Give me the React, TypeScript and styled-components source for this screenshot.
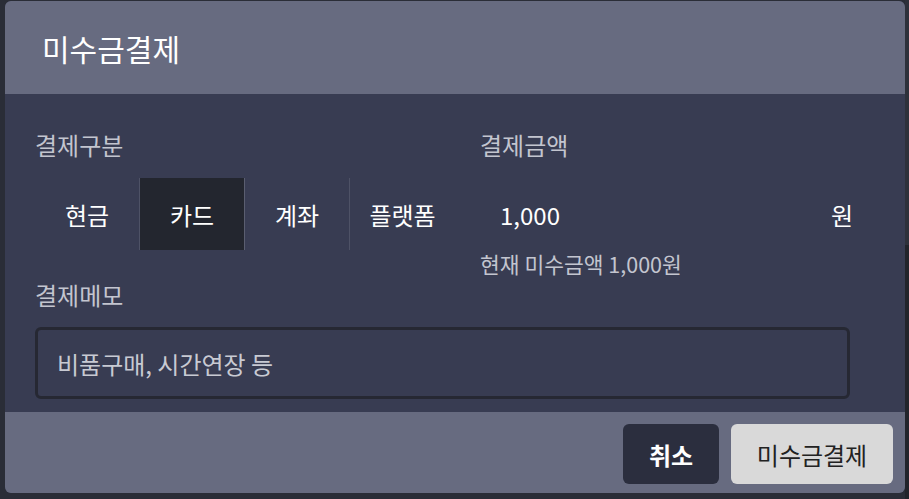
import React, { useState } from "react";
import styled, { createGlobalStyle } from "styled-components";

const GlobalStyle = createGlobalStyle`
  html, body {
    margin: 0;
    padding: 0;
    background: #2a2d37;
  }
  body {
    font-family: "Noto Sans CJK KR", "Noto Sans", sans-serif;
    -webkit-font-smoothing: antialiased;
  }
  * { box-sizing: border-box; }
`;

// Dimmed page behind the dialog; the right edge shows a lighter panel above a darker one.
const Backdrop = styled.div`
  width: 909px;
  height: 499px;
  padding: 1px 4px 6px 5px;
  background:
    linear-gradient(#2e313b, #2e313b) right top / 4px 245px no-repeat,
    linear-gradient(#22242b, #22242b) right bottom / 4px 254px no-repeat,
    #2a2d37;
`;

const Modal = styled.div`
  width: 900px;
  height: 492px;
  border-radius: 6px;
  overflow: hidden;
  display: flex;
  flex-direction: column;
  background: #383c52;
`;

const Header = styled.header`
  height: 93px;
  flex: none;
  display: flex;
  align-items: center;
  padding-left: 37px;
  background: #676b80;
`;

const Title = styled.h2`
  margin: 0;
  font-size: 30px;
  line-height: 34px;
  font-weight: 400;
  color: #ffffff;
`;

const Body = styled.div`
  flex: 1;
  display: flex;
  flex-direction: column;
  padding: 39px 52px 0 30px;
`;

const TopGrid = styled.div`
  display: grid;
  grid-template-columns: 420px 1fr;
  column-gap: 25px;
`;

const Field = styled.div`
  display: flex;
  flex-direction: column;
`;

const Label = styled.div`
  font-size: 24px;
  line-height: 24px;
  color: #c3c5cf;
  margin-bottom: 21px;
`;

const Segments = styled.div`
  display: flex;
  height: 72px;
`;

const Segment = styled.button<{ $active?: boolean }>`
  width: 105px;
  height: 72px;
  padding: 0;
  border: none;
  border-right: 1px solid ${(p) => (p.$active ? "#5a5e70" : "#4e5266")};
  background: ${(p) => (p.$active ? "#23262f" : "transparent")};
  color: #ffffff;
  font-family: inherit;
  font-size: 24px;
  cursor: pointer;
  &:last-child {
    border-right: none;
  }
`;

const AmountRow = styled.div`
  height: 72px;
  display: flex;
  align-items: center;
`;

const AmountInput = styled.input`
  flex: 1;
  min-width: 0;
  height: 100%;
  padding: 0 0 0 20px;
  border: none;
  outline: none;
  background: transparent;
  color: #ffffff;
  font-family: inherit;
  font-size: 24px;
`;

const Unit = styled.span`
  font-size: 24px;
  color: #ffffff;
`;

const Hint = styled.div`
  margin-top: 2px;
  font-size: 21.5px;
  line-height: 24px;
  color: #c3c5cf;
`;

const MemoField = styled(Field)`
  margin-top: 7px;
`;

const MemoLabel = styled(Label)`
  margin-bottom: 20px;
`;

const MemoInput = styled.input`
  width: 815px;
  height: 72px;
  padding: 0 19px;
  border: 3px solid #262833;
  border-radius: 6px;
  background: transparent;
  outline: none;
  color: #ffffff;
  font-family: inherit;
  font-size: 24px;
  &::placeholder {
    color: #c8cad3;
  }
`;

const Footer = styled.footer`
  height: 81px;
  flex: none;
  display: flex;
  justify-content: flex-end;
  align-items: flex-start;
  gap: 12px;
  padding: 12px 12px 0 0;
  background: #676b80;
`;

const ActionButton = styled.button<{ $primary?: boolean }>`
  height: 60px;
  width: ${(p) => (p.$primary ? "162px" : "96px")};
  border: none;
  border-radius: 6px;
  background: ${(p) => (p.$primary ? "#d9d9d9" : "#2b2e3e")};
  color: ${(p) => (p.$primary ? "#222222" : "#ffffff")};
  font-family: inherit;
  font-size: 24px;
  font-weight: ${(p) => (p.$primary ? 400 : 700)};
  cursor: pointer;
`;

const methods = ["현금", "카드", "계좌", "플랫폼"];

export default function App() {
  const [method, setMethod] = useState("카드");
  const [amount, setAmount] = useState("1,000");

  return (
    <>
      <GlobalStyle />
      <Backdrop>
        <Modal>
          <Header>
            <Title>미수금결제</Title>
          </Header>
          <Body>
            <TopGrid>
              <Field>
                <Label>결제구분</Label>
                <Segments>
                  {methods.map((m) => (
                    <Segment key={m} $active={m === method} onClick={() => setMethod(m)}>
                      {m}
                    </Segment>
                  ))}
                </Segments>
              </Field>
              <Field>
                <Label>결제금액</Label>
                <AmountRow>
                  <AmountInput value={amount} onChange={(e) => setAmount(e.target.value)} />
                  <Unit>원</Unit>
                </AmountRow>
                <Hint>현재 미수금액 1,000원</Hint>
              </Field>
            </TopGrid>
            <MemoField>
              <MemoLabel>결제메모</MemoLabel>
              <MemoInput placeholder="비품구매, 시간연장 등" />
            </MemoField>
          </Body>
          <Footer>
            <ActionButton>취소</ActionButton>
            <ActionButton $primary>미수금결제</ActionButton>
          </Footer>
        </Modal>
      </Backdrop>
    </>
  );
}
